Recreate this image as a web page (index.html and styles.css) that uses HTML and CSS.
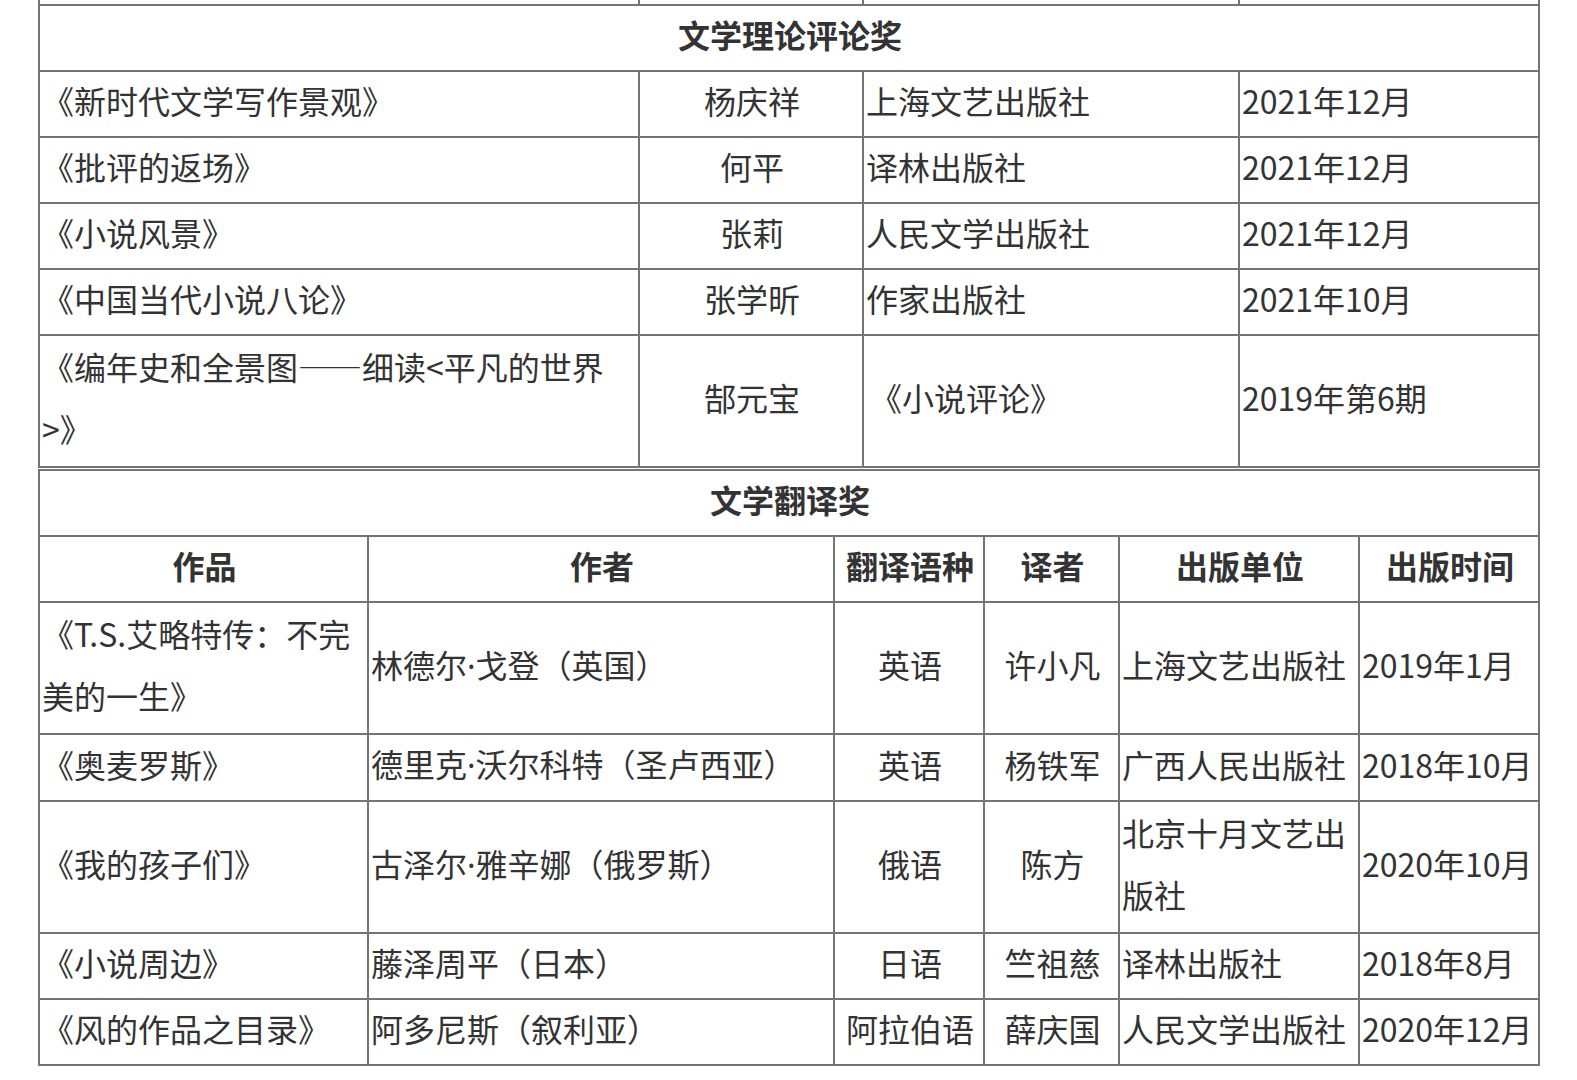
FILE: index.html
```html
<!DOCTYPE html>
<html lang="zh-CN">
<head>
<meta charset="utf-8">
<title>文学奖</title>
<link rel="stylesheet" href="styles.css">
</head>
<body>
<div class="page">
<table class="award award-theory">
  <colgroup>
    <col class="c-work"><col class="c-author"><col class="c-pub"><col class="c-date">
  </colgroup>
  <tr class="prev-row"><td></td><td></td><td></td><td></td></tr>
  <tr><th colspan="4" class="section">文学理论评论奖</th></tr>
  <tr><td>《新时代文学写作景观》</td><td class="center">杨庆祥</td><td>上海文艺出版社</td><td>2021年12月</td></tr>
  <tr><td>《批评的返场》</td><td class="center">何平</td><td>译林出版社</td><td>2021年12月</td></tr>
  <tr><td>《小说风景》</td><td class="center">张莉</td><td>人民文学出版社</td><td>2021年12月</td></tr>
  <tr><td>《中国当代小说八论》</td><td class="center">张学昕</td><td>作家出版社</td><td>2021年10月</td></tr>
  <tr><td class="multi">《编年史和全景图——细读&lt;平凡的世界<br>&gt;》</td><td class="center">郜元宝</td><td class="indent">《小说评论》</td><td>2019年第6期</td></tr>
</table>
<table class="award award-trans">
  <colgroup>
    <col class="t-work"><col class="t-author"><col class="t-lang"><col class="t-translator"><col class="t-pub"><col class="t-date">
  </colgroup>
  <tr><th colspan="6" class="section">文学翻译奖</th></tr>
  <tr class="head"><th>作品</th><th>作者</th><th>翻译语种</th><th>译者</th><th>出版单位</th><th>出版时间</th></tr>
  <tr><td class="multi">《T.S.艾略特传：不完<br>美的一生》</td><td>林德尔<span class="dot">·</span>戈登（英国）</td><td class="center">英语</td><td class="center">许小凡</td><td>上海文艺出版社</td><td>2019年1月</td></tr>
  <tr><td>《奥麦罗斯》</td><td>德里克<span class="dot">·</span>沃尔科特（圣卢西亚）</td><td class="center">英语</td><td class="center">杨铁军</td><td>广西人民出版社</td><td>2018年10月</td></tr>
  <tr><td>《我的孩子们》</td><td>古泽尔<span class="dot">·</span>雅辛娜（俄罗斯）</td><td class="center">俄语</td><td class="center">陈方</td><td class="multi">北京十月文艺出<br>版社</td><td>2020年10月</td></tr>
  <tr><td>《小说周边》</td><td>藤泽周平（日本）</td><td class="center">日语</td><td class="center">竺祖慈</td><td>译林出版社</td><td>2018年8月</td></tr>
  <tr><td>《风的作品之目录》</td><td>阿多尼斯（叙利亚）</td><td class="center">阿拉伯语</td><td class="center">薛庆国</td><td>人民文学出版社</td><td>2020年12月</td></tr>
</table>
</div>
</body>
</html>
```

FILE: styles.css
```css
html, body {
  margin: 0;
  padding: 0;
  background: #ffffff;
}

.page {
  padding-left: 38px;
  font-family: "Noto Sans CJK SC", "Noto Sans", sans-serif;
  color: #333333;
  font-size: 32px;
}

.award {
  border-collapse: collapse;
  table-layout: fixed;
}

.award td,
.award th {
  border: 2px solid #747474;
  line-height: 57px;
  padding: 0 0 7px 2px;
  vertical-align: middle;
  text-align: left;
  white-space: nowrap;
  overflow: hidden;
  font-weight: 400;
}

.award td.multi {
  line-height: 61.5px;
}

.award th {
  font-weight: 700;
  text-align: center;
}

.award td.center {
  text-align: center;
}

.award td.indent {
  padding-left: 6px;
}

.dot {
  font-family: "Noto Sans", sans-serif;
}

.award-theory {
  margin-top: -62px;
  width: 1500px;
}

.prev-row td {
  height: 57px;
}

.award-trans {
  margin-top: 1px;
  width: 1500px;
}

.c-work { width: 600px; }
.c-author { width: 224px; }
.c-pub { width: 376px; }
.c-date { width: 300px; }

.t-work { width: 329px; }
.t-author { width: 466px; }
.t-lang { width: 150px; }
.t-translator { width: 135px; }
.t-pub { width: 240px; }
.t-date { width: 180px; }
```
